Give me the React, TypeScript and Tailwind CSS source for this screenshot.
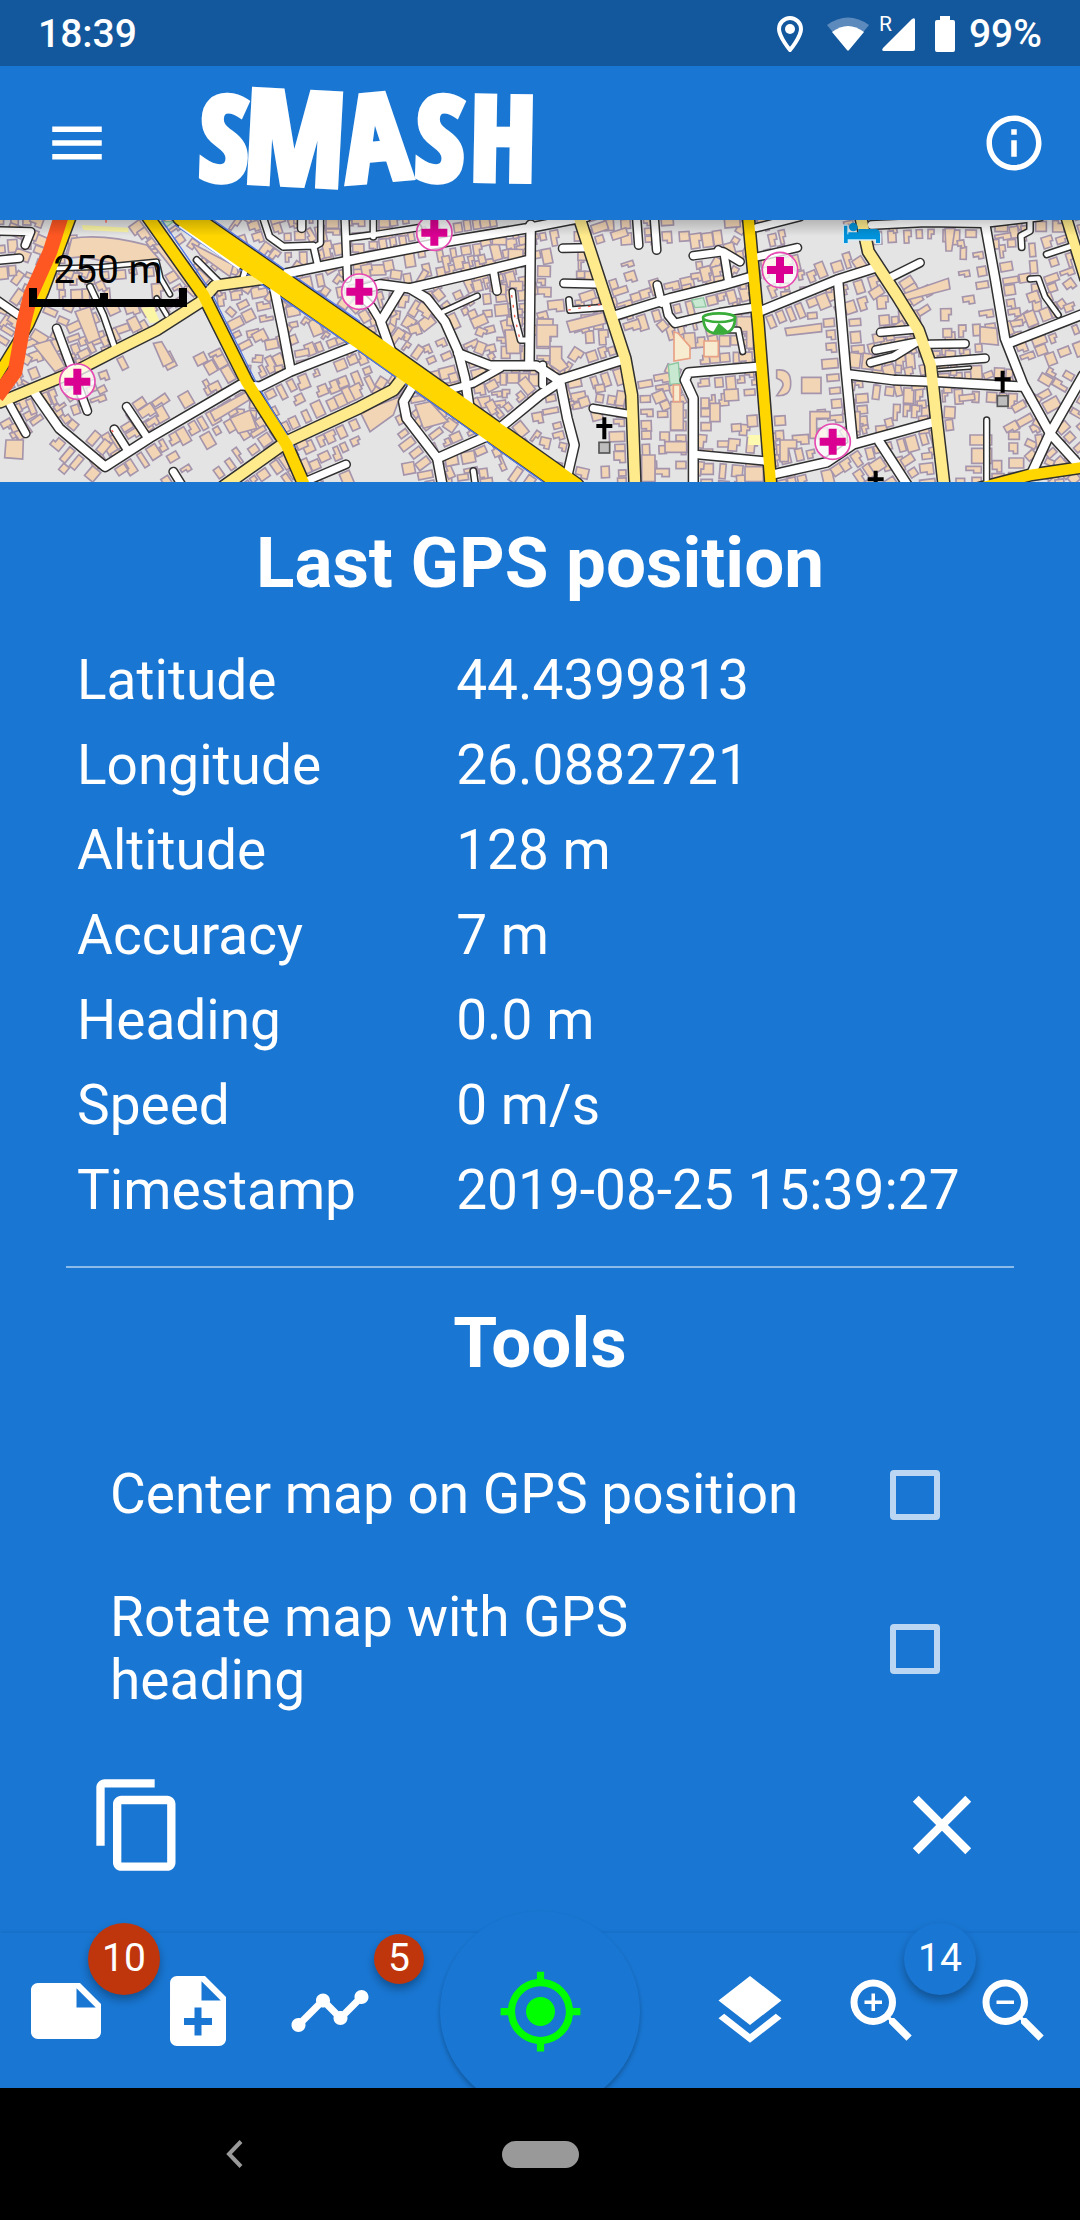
import React from "react";
import {
  MdClose,
  MdContentCopy,
  MdGpsFixed,
  MdInfoOutline,
  MdLayers,
  MdMenu,
  MdNote,
  MdNoteAdd,
  MdTimeline,
  MdZoomIn,
  MdZoomOut,
} from "react-icons/md";

type Point = [number, number];
type Kind = "street" | "lane" | "alley" | "secondary" | "primary";
type Road = { kind: Kind; pts: Point[]; width?: number };

const WIDTHS: Record<Kind, number> = { street: 25, lane: 21, alley: 11, secondary: 32, primary: 36 };
const COLORS: Record<Kind, string> = {
  street: "#ffffff",
  lane: "#ffffff",
  alley: "#ffffff",
  secondary: "#ffeb8c",
  primary: "#ffd600",
};

const r = (kind: Kind, dx: number, pts: Point[], width?: number): Road => ({
  kind,
  width,
  pts: pts.map(([x, y]) => [x + dx, y] as Point),
});

const ROADS: Road[] = [
  r("alley", 0, [[170, 160], [300, 156], [470, 140], [482, 190], [510, 238]]),
  r("alley", 0, [[470, 250], [500, 300]]),
  r("alley", 0, [[270, 215], [310, 300], [345, 400]], 15),
  r("alley", 0, [[590, 135], [655, 200]], 15),
  r("alley", 1080, [[250, 290], [352, 243]], 13),
  r("alley", 1080, [[457, 230], [465, 310], [482, 375], [505, 375]], 15),
  r("alley", 1080, [[627, 255], [630, 285], [740, 277]], 15),
  r("alley", 2160, [[0, 345], [55, 345], [68, 410]], 13),
  r("alley", 2160, [[930, 192], [955, 190], [975, 245], [1015, 300]], 13),
  r("alley", 2160, [[905, 97], [903, 62], [930, 48], [930, 10]], 15),
  r("alley", 2160, [[980, 118], [1050, 95]], 15),
  r("alley", 2160, [[800, 615], [800, 805]], 13),
  r("alley", 2160, [[655, 465], [750, 458]], 5),
  r("lane", 0, [[343, 643], [382, 705]]),
  r("lane", 0, [[380, 575], [440, 665]]),
  r("lane", 0, [[170, 340], [262, 588]]),
  r("lane", 0, [[30, 570], [77, 655]]),
  r("lane", 0, [[-10, 255], [55, 300]]),
  r("lane", 0, [[-10, 136], [58, 130]]),
  r("lane", 0, [[-10, 48], [92, 50], [76, 90]]),
  r("lane", 0, [[520, 770], [545, 810]]),
  r("lane", 0, [[1038, 748], [920, 798]]),
  r("lane", 0, [[730, 185], [740, 150]], 15),
  r("lane", 0, [[790, 10], [808, 65], [850, 95], [940, 92], [952, 145]], 17),
  r("lane", 0, [[962, 10], [962, 85], [945, 95]], 13),
  r("lane", 0, [[905, 10], [905, 40]]),
  r("street", 0, [[1035, 10], [1042, 190]], 20),
  r("lane", 1080, [[40, 10], [40, 65]], 15),
  r("lane", 1080, [[-40, 70], [50, 58], [175, 38]], 15),
  r("lane", 1080, [[400, 165], [411, 228]]),
  r("lane", 1080, [[608, 100], [690, 98]]),
  r("lane", 1080, [[612, 205], [710, 207]]),
  r("lane", 1080, [[830, 10], [836, 90]]),
  r("lane", 1080, [[883, 10], [890, 105]]),
  r("lane", 1080, [[1000, 122], [1090, 110], [1140, 140]]),
  r("lane", 1080, [[700, 580], [810, 598]]),
  r("lane", 1080, [[892, 210], [905, 265]]),
  r("lane", 1080, [[340, 768], [346, 810]], 15),
  r("lane", 2160, [[482, 352], [590, 342]]),
  r("lane", 2160, [[468, 405], [595, 380]]),
  r("lane", 2160, [[452, 443], [520, 425], [590, 382]]),
  r("lane", 2160, [[630, 388], [735, 386]]),
  r("lane", 2160, [[640, 442], [795, 430]]),
  r("lane", 2160, [[510, 188], [600, 143]]),
  r("lane", 2160, [[115, 125], [232, 98]]),
  r("lane", 2160, [[-5, 105], [12, 115], [25, 195]]),
  r("lane", 2160, [[110, 38], [240, 5]]),
  r("lane", 2160, [[455, 30], [620, 22], [790, 25], [960, 5]], 22),
  r("street", 0, [[1085, 385], [870, 470], [780, 515], [720, 510], [450, 668], [315, 755], [178, 640], [105, 535]]),
  r("street", 0, [[872, 468], [850, 350], [822, 215]]),
  r("street", 0, [[860, 175], [1080, 130], [1340, 80], [1580, 40], [1760, 5]]),
  r("street", 1080, [[0, 225], [60, 208], [150, 220], [330, 178], [505, 135]]),
  r("street", 1080, [[512, 30], [508, 445]]),
  r("street", 1080, [[150, 220], [200, 250], [255, 320], [295, 410], [315, 490], [330, 590]]),
  r("street", 1080, [[120, 225], [62, 320], [92, 405]]),
  r("street", 1080, [[0, 240], [35, 275], [62, 320]], 20),
  r("street", 1080, [[295, 415], [390, 452], [530, 452], [600, 498], [622, 610], [643, 690], [620, 790]]),
  r("street", 1080, [[250, 530], [340, 505], [420, 460]], 20),
  r("street", 1080, [[590, 497], [785, 435]]),
  r("street", 1080, [[548, 450], [548, 510]], 20),
  r("street", 1080, [[600, 500], [540, 540], [400, 655], [232, 730], [140, 610], [130, 560], [160, 510]]),
  r("street", 1080, [[232, 730], [247, 810]]),
  r("street", 1080, [[760, 303], [930, 250], [1090, 210], [1175, 185]]),
  r("street", 1080, [[915, 255], [925, 300], [945, 325], [1080, 293], [1195, 275]], 22),
  r("street", 1080, [[1200, 455], [985, 473], [975, 495], [1000, 550], [1000, 810]]),
  r("street", 1080, [[1005, 718], [1215, 738]], 22),
  r("street", 2160, [[125, 287], [350, 195], [460, 160]]),
  r("street", 2160, [[355, 205], [378, 470], [398, 680]]),
  r("street", 2160, [[385, 478], [520, 495], [640, 500], [905, 515]]),
  r("street", 2160, [[165, 777], [320, 742], [400, 688], [520, 655], [645, 620]]),
  r("street", 2160, [[478, 680], [562, 810]]),
  r("street", 2160, [[795, 25], [825, 190], [855, 370], [910, 510], [990, 655], [1090, 765]]),
  r("street", 2160, [[935, 775], [990, 655], [1090, 480]]),
  r("street", 2160, [[865, 385], [1090, 297]]),
  r("secondary", 0, [[0, 562], [230, 467], [350, 405], [470, 345], [600, 262], [645, 212], [800, 190]], 30),
  r("secondary", 0, [[670, 815], [860, 680], [1080, 577], [1180, 525], [1215, 480]], 32),
  r("secondary", 1080, [[655, 0], [730, 230], [795, 430], [815, 540], [825, 810]]),
  r("secondary", 2160, [[422, 5], [445, 110], [530, 240], [595, 345], [632, 450], [650, 620], [672, 810]]),
  r("secondary", 2160, [[1038, 5], [1095, 190]], 28),
  r("primary", 2160, [[85, 5], [115, 330], [153, 815]], 32),
  r("primary", 2160, [[770, 822], [930, 780], [1100, 755]], 32),
  r("primary", 0, [[215, 0], [130, 230], [85, 330], [-10, 485]], 28),
  r("primary", 0, [[440, 0], [610, 240], [740, 500], [860, 690], [915, 815]], 34),
  r("primary", 0, [[550, 0], [1080, 367], [1720, 820]], 66),
];

const OPEN_GROUND: [number, number, number, number][] = [
  [370, 390, 470, 560],
  [500, 280, 650, 410],
  [220, 15, 400, 160],
  [90, 620, 170, 790],
  [250, 560, 340, 640],
  [360, 180, 470, 280],
  [1080, 640, 1160, 720],
  [1670, 20, 1730, 340],
  [1780, 80, 1880, 190],
  [1860, 340, 2010, 480],
  [1700, 610, 1850, 760],
  [1950, 100, 2060, 180],
  [2290, 330, 2490, 560],
  [2360, 30, 2560, 110],
  [2580, 90, 2880, 180],
  [2850, 560, 3000, 740],
];

function randomFrom(seed: number) {
  let s = seed;
  return () => {
    s = (s * 1664525 + 1013904223) % 4294967296;
    return s / 4294967296;
  };
}

const toPath = (pts: Point[]) => pts.map(([x, y], i) => `${i ? "L" : "M"}${x} ${y}`).join("");

type Building = { x: number; y: number; a: number; d: string };

/* Houses line both sides of every road, turned to face it. */
function buildHouses(): Building[] {
  const out: Building[] = [];
  const rnd = randomFrom(77);
  for (const road of ROADS) {
    const half = (road.width ?? WIDTHS[road.kind]) / 2;
    for (let i = 1; i < road.pts.length; i++) {
      const [x0, y0] = road.pts[i - 1];
      const [x1, y1] = road.pts[i];
      const len = Math.hypot(x1 - x0, y1 - y0);
      const ux = (x1 - x0) / len;
      const uy = (y1 - y0) / len;
      const a = Math.round((Math.atan2(uy, ux) * 180) / Math.PI);
      for (const side of [-1, 1]) {
        for (const row of [0, 1]) {
          for (let t = 14; t < len; t += 26 + rnd() * 22) {
            const w = Math.round(16 + rnd() * 18);
            const h = Math.round(20 + rnd() * 28);
            const off = side * (half + 10 + h / 2 + row * 50);
            const x = Math.round(x0 + ux * t - uy * off);
            const y = Math.round(y0 + uy * t + ux * off);
            if (rnd() < (row ? 0.55 : 0.15)) continue;
            if (OPEN_GROUND.some(([l, tp, rt, b]) => x > l && x < rt && y > tp && y < b)) continue;
            if (out.some((o) => Math.hypot(o.x - x, o.y - y) < 23)) continue;
            const p = Math.round(w / 2);
            const q = Math.round(h / 2);
            const d =
              rnd() < 0.4
                ? `M${-p} ${-q}H${p}V0H${p - 8}V${q}H${-p}Z`
                : `M${-p} ${-q}H${p}V${q}H${-p}Z`;
            out.push({ x, y, a, d });
          }
        }
      }
    }
  }
  return out;
}

const HOUSES = buildHouses();

const BLOCKS = [
  "M215 70Q310 55 440 90L480 135L360 150L250 125L200 130Z",
  "M460 90L500 85L590 205L560 215Z",
  "M575 85L700 150L690 185L600 120Z",
  "M100 390L150 375L195 455L165 470Z",
  "M18 675L70 675L68 732L14 728Z",
  "M630 590L740 530L748 555L645 618Z",
  "M225 290L270 275L300 370L265 385Z",
  "M460 385L485 380L520 440L490 455Z",
  "M690 610L750 585L770 640L715 655Z",
  "M1700 320L1810 292L1818 325L1710 352Z",
  "M1610 330H1672V365H1650V395H1610Z",
  "M1650 395H1685V430L1705 455L1680 470L1650 450Z",
  "M1515 345H1560V415H1520Z",
  "M1245 570L1290 560L1345 620L1270 640Z",
  "M1080 590L1200 545L1180 600L1110 650Z",
  "M2012 560H2050V645H2012Z",
  "M2130 565H2160V620H2130Z",
  "M1925 720H1965V800H1925Z",
  "M1995 680H2060V712H1995Z",
  "M2355 340L2465 325V350L2360 362Z",
  "M2405 487H2463V535H2405Z",
  "M2330 465Q2375 460 2372 510Q2370 545 2330 542L2345 520Q2358 500 2330 490Z",
  "M2430 590H2490V610H2450V670H2430Z",
  "M2340 675H2390V700H2365V740H2340Z",
  "M2700 240L2845 190L2850 222L2720 255Z",
  "M2835 40H2865L2855 108H2838Z",
  "M2940 335L2990 340L2995 390L2940 385Z",
  "M2910 660H2975V690H2910Z",
  "M2915 700H2975V745H2915Z",
  "M2210 305H2260V400H2240V350H2210Z",
  "M2235 755H2290V800H2235Z",
  "M2545 590H2580V650H2545Z",
];

const HOSPITALS: Point[] = [[232, 500], [1078, 230], [1303, 53], [2340, 165], [2498, 680]];
const CHURCHES: Point[] = [[1813, 640], [3008, 500], [2627, 800]];

function CityMap() {
  return (
    <svg
      viewBox="0 15 3240 786"
      preserveAspectRatio="xMidYMid slice"
      className="block h-full w-full"
      role="img"
      aria-label="Street map"
    >
      <rect x="0" y="0" width="3240" height="820" fill="#e4e4e4" />
      <g fill="#f2d5b5" stroke="#a595ac" strokeWidth="5">
        {HOUSES.map((b, i) => (
          <path key={i} d={b.d} transform={`translate(${b.x} ${b.y}) rotate(${b.a})`} />
        ))}
        {BLOCKS.map((d) => (
          <path key={d} d={d} />
        ))}
      </g>
      <path d="M245 30L385 38V52L250 45ZM425 280L460 275L480 320L450 325Z" fill="#fbf6a5" />
      <path d="M2245 660H2285V690H2245Z" fill="#fdfab0" />
      <g fill="#c9e8d2" stroke="#8cc7a0" strokeWidth="4">
        <path d="M2005 450L2035 443L2040 505L2010 508ZM2075 255L2110 248L2118 275L2085 278ZM480 20L520 20L500 35Z" />
      </g>
      <g fill="#f7ecd0" stroke="#e8a184" strokeWidth="5">
        <path d="M2022 350L2035 355L2070 395V430L2022 438ZM2112 378H2155V425H2112ZM2020 510H2040V560H2020Z" />
      </g>
      <g fill="none" strokeLinejoin="round" strokeLinecap="round" stroke="#303030">
        {ROADS.map((road, i) => (
          <path key={i} d={toPath(road.pts)} strokeWidth={(road.width ?? WIDTHS[road.kind]) + 9} />
        ))}
      </g>
      <g fill="none" stroke="#5479e8" strokeWidth="4">
        <path d="M485 15L630 225L775 515L885 700" />
        <path d="M525 30L1080 410L1630 801M640 15L1080 320" />
      </g>
      <path d="M540 30L720 158" stroke="#ffffff" strokeWidth="14" />
      <g fill="none" strokeLinejoin="round" strokeLinecap="round">
        {ROADS.map((road, i) => (
          <path
            key={i}
            d={toPath(road.pts)}
            stroke={COLORS[road.kind]}
            strokeWidth={road.width ?? WIDTHS[road.kind]}
          />
        ))}
      </g>
      <path d="M185 0L150 110L92 240L72 320L45 470L-10 545" fill="none" stroke="#ff5722" strokeWidth="44" />
      <g fill="none" stroke="#ff5a4a" strokeWidth="4" strokeDasharray="8 22">
        <path d="M1535 240L1545 310L1560 375M1705 285L1820 265M335 645L345 660M318 15V40" />
      </g>
      {HOSPITALS.map(([x, y]) => (
        <g key={`${x}-${y}`}>
          <circle cx={x} cy={y} r="53" fill="#ffffff" fillOpacity="0.75" stroke="#e64bb2" strokeWidth="5" />
          <path d={`M${x - 39} ${y}H${x + 39}M${x} ${y - 39}V${y + 39}`} stroke="#da0092" strokeWidth="24" />
        </g>
      ))}
      {CHURCHES.map(([x, y]) => (
        <g key={`${x}-${y}`} stroke="#000000">
          <path d={`M${x - 24} ${y - 7}H${x + 24}M${x} ${y - 33}V${y + 33}`} strokeWidth="12" />
          <rect x={x - 16} y={y + 42} width="32" height="32" fill="#bdbdbd" stroke="#555555" strokeWidth="5" />
        </g>
      ))}
      <g stroke="#d5ecf8" strokeWidth="8" strokeLinejoin="round" fill="#d5ecf8">
        <path d="M2532 32H2542V58H2640V84H2628V73H2543V84H2532Z" />
      </g>
      <g fill="#0092da">
        <path d="M2532 32H2542V58H2640V84H2628V73H2543V84H2532Z" />
        <path d="M2575 42H2628Q2640 42 2640 60H2575ZM2545 52H2575V60H2545Z" />
        <circle cx="2560" cy="36" r="13" />
      </g>
      <g fill="#ffffff" stroke="#39ac39" strokeWidth="8">
        <path d="M2110 308Q2110 350 2145 355H2170Q2205 350 2205 308Z" />
        <ellipse cx="2157" cy="308" rx="48" ry="13" />
        <path d="M2145 350L2157 330L2180 350Z" fill="#39ac39" />
      </g>
    </svg>
  );
}

const LOGO_LETTERS = [
  { ch: "S", x: 28, y: 92, size: 116, turn: 2 },
  { ch: "M", x: 99, y: 96, size: 128, turn: 3 },
  { ch: "A", x: 180, y: 92, size: 118, turn: -5 },
  { ch: "S", x: 244, y: 92, size: 116, turn: 2 },
  { ch: "H", x: 307, y: 92, size: 116, turn: 1 },
];

function Logo() {
  return (
    <svg viewBox="0 0 340 110" className="h-[110px] w-[340px] overflow-visible" role="img" aria-label="SMASH">
      {LOGO_LETTERS.map((l, i) => (
        <text
          key={i}
          x={l.x}
          y={l.y}
          fontSize={l.size}
          textAnchor="middle"
          transform={`rotate(${l.turn} ${l.x} 50)`}
          className="fill-white stroke-white stroke-[7px] font-['Liberation_Sans_Narrow','Open_Sans_Condensed',Roboto,sans-serif] font-bold"
        >
          {l.ch}
        </text>
      ))}
    </svg>
  );
}

function StatusBar() {
  return (
    <div className="flex h-[66px] items-center justify-between bg-[#13589d] pt-0.5 pr-[38px] pl-[38px] text-[39px] leading-[48px] font-medium">
      <span>18:39</span>
      <div className="flex items-center">
        <svg viewBox="0 0 26 36" className="mr-6 h-9 w-[26px]" aria-label="Location">
          <path d="M13 2C7 2 2 7 2 13C2 21 13 34 13 34S24 21 24 13C24 7 19 2 13 2Z" fill="none" stroke="#fff" strokeWidth="4" />
          <circle cx="13" cy="13" r="5" fill="#fff" />
        </svg>
        <svg viewBox="0 0 42 34" className="mr-2.5 h-[34px] w-[42px]" aria-label="Wi-Fi">
          <path d="M0 8Q21 -7 42 8L21 34Z" fill="#5c8abc" />
          <path d="M5 15Q21 3 37 15L22 33Q21 34 20 33Z" fill="#fff" />
        </svg>
        <div className="relative mr-5 h-9 w-9">
          <span className="absolute top-0 left-0 text-[21px] leading-4 font-normal">R</span>
          <svg viewBox="0 0 36 36" className="h-9 w-9" aria-label="Signal">
            <path d="M36 4V33Q36 35 34 35H5Q2 35 4 32L33 3Q36 1 36 4Z" fill="#fff" />
          </svg>
        </div>
        <svg viewBox="0 0 20 36" className="mr-3.5 h-9 w-5" aria-label="Battery">
          <path d="M5 0H15V4H18Q20 4 20 6V34Q20 36 18 36H2Q0 36 0 34V6Q0 4 2 4H5Z" fill="#fff" />
        </svg>
        <span>99%</span>
      </div>
    </div>
  );
}

const READINGS = [
  ["Latitude", "44.4399813"],
  ["Longitude", "26.0882721"],
  ["Altitude", "128 m"],
  ["Accuracy", "7 m"],
  ["Heading", "0.0 m"],
  ["Speed", "0 m/s"],
  ["Timestamp", "2019-08-25 15:39:27"],
];

function ToolOption({ id, label }: { id: string; label: string }) {
  return (
    <div className="flex min-h-[147px] items-center justify-between gap-20 py-[18px] pr-[74px] pl-11">
      <label htmlFor={id} className="flex-1 text-[55px] leading-[63px]">
        {label}
      </label>
      <input
        id={id}
        type="checkbox"
        className="size-[50px] shrink-0 appearance-none rounded-[4px] border-[6px] border-white/70 checked:bg-white/70"
      />
    </div>
  );
}

function GpsPanel() {
  return (
    <main className="flex-1 px-[66px] pt-[39px]">
      <h1 className="text-center text-[71px] leading-[84px] font-bold">Last GPS position</h1>
      <table className="mt-[33px] w-full table-fixed text-left text-[55px] leading-[65px]">
        <tbody>
          {READINGS.map(([name, value]) => (
            <tr key={name}>
              <th scope="row" className="w-2/5 px-[11px] py-2.5 font-normal">
                {name}
              </th>
              <td className="px-[11px] py-2.5 whitespace-nowrap">{value}</td>
            </tr>
          ))}
        </tbody>
      </table>
      <hr className="mt-[33px] border-t-2 border-white/50" />
      <h2 className="mt-[33px] mb-9 text-center text-[71px] leading-[84px] font-bold">Tools</h2>
      <ToolOption id="center-map" label="Center map on GPS position" />
      <ToolOption id="rotate-map" label="Rotate map with GPS heading" />
      <div className="mt-[45px] flex justify-between px-[22px]">
        <button type="button" aria-label="Copy position">
          <MdContentCopy className="size-[100px]" />
        </button>
        <button type="button" aria-label="Close">
          <MdClose className="size-[100px]" />
        </button>
      </div>
    </main>
  );
}

function BarButton({ label, icon, badge }: { label: string; icon: React.ReactNode; badge?: React.ReactNode }) {
  return (
    <div className="relative flex flex-[11] justify-center">
      <button type="button" aria-label={label}>
        {icon}
      </button>
      {badge}
    </div>
  );
}

const BADGE =
  "absolute z-10 flex items-center justify-center rounded-full text-[39px] leading-none shadow-[0_5px_8px_rgba(0,0,0,0.3)]";

function BottomBar() {
  return (
    <nav className="relative h-[155px] shadow-[0_-1px_3px_rgba(0,0,0,0.08)]">
      <div className="flex h-full items-center">
        <BarButton
          label="Notes"
          icon={<MdNote className="size-[84px]" />}
          badge={<span className={`${BADGE} -top-[46px] left-[88px] size-[72px] bg-[#bf360c]`}>10</span>}
        />
        <BarButton label="Add note" icon={<MdNoteAdd className="size-[84px]" />} />
        <BarButton
          label="Logs"
          icon={<MdTimeline className="size-[84px]" />}
          badge={<span className={`${BADGE} -top-[35px] left-[110px] size-[50px] bg-[#bf360c]`}>5</span>}
        />
        <div className="relative flex h-full flex-[24] justify-center">
          <div className="absolute -top-[24px] h-[179px] w-60 overflow-hidden pt-0.5">
            <button
              type="button"
              aria-label="GPS"
              className="mx-auto flex size-[200px] items-center justify-center rounded-full bg-[#1976d2] text-[#00ff00] shadow-[0_3px_4px_rgba(0,0,0,0.25)]"
            >
              <MdGpsFixed className="size-[87px]" />
            </button>
          </div>
        </div>
        <BarButton label="Layers" icon={<MdLayers className="size-[84px]" />} />
        <BarButton
          label="Zoom in"
          icon={<MdZoomIn className="size-[84px]" />}
          badge={<span className={`${BADGE} -top-[46px] left-[88px] size-[72px] bg-[#1976d2]`}>14</span>}
        />
        <BarButton label="Zoom out" icon={<MdZoomOut className="size-[84px]" />} />
      </div>
    </nav>
  );
}

function SystemNav() {
  return (
    <div className="grid h-[132px] grid-cols-[235px_1fr_235px] items-center bg-black">
      <button type="button" aria-label="Back" className="justify-self-end">
        <svg viewBox="0 0 17 28" className="-mr-2 block h-7 w-[17px]" fill="none" stroke="#999999" strokeWidth="4">
          <path d="M15 1.5L3 14L15 26.5" />
        </svg>
      </button>
      <button type="button" aria-label="Home" className="h-[27px] w-[77px] justify-self-center rounded-full bg-[#999999]" />
    </div>
  );
}

export default function App() {
  return (
    <div className="flex min-h-screen flex-col bg-[#1976d2] font-[Roboto,sans-serif] text-white">
      <StatusBar />
      <header className="flex h-[154px] items-center pr-[33px] pl-11">
        <button type="button" aria-label="Menu">
          <MdMenu className="size-[66px]" />
        </button>
        <div className="ml-[86px]">
          <Logo />
        </div>
        <button type="button" aria-label="About" className="ml-auto">
          <MdInfoOutline className="size-[66px]" />
        </button>
      </header>
      <section className="relative h-[262px] overflow-hidden">
        <CityMap />
        <div className="absolute inset-x-0 top-0 h-4 bg-linear-to-b from-black/20 to-transparent" />
        <div className="absolute top-9 left-[29px] w-[158px] text-center text-[39px] leading-7 text-black">
          250 m
          <div className="relative mt-1 h-[19px] border-x-8 border-b-8 border-black">
            <div className="absolute bottom-0 left-[63px] h-[6px] w-2 bg-black" />
          </div>
        </div>
      </section>
      <GpsPanel />
      <BottomBar />
      <SystemNav />
    </div>
  );
}
